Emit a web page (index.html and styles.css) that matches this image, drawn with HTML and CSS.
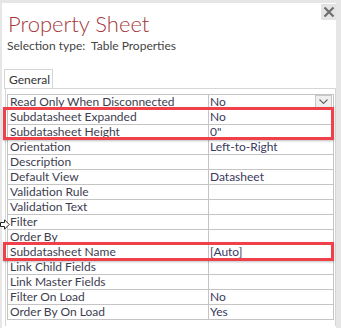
FILE: index.html
```html
<!DOCTYPE html>
<html lang="en">
<head>
  <meta charset="UTF-8" />
  <title>Property Sheet</title>
  <link rel="stylesheet" href="styles.css">
</head>
<body>

<div class="sheet">
  <div class="header">
    <h1>Property Sheet</h1>
    <button class="close" title="Close">
      <svg width="12" height="12" viewBox="0 0 12 12">
        <path d="M1.5 1.5 L10.5 10.5 M10.5 1.5 L1.5 10.5" stroke="#6e6e6e" stroke-width="2.2"/>
      </svg>
    </button>
  </div>
  <div class="selection">Selection type:&nbsp; Table Properties</div>

  <div class="tabs">
    <div class="tab">General</div>
  </div>

  <div class="panel">
    <div class="grid">
      <div class="cell">Read Only When Disconnected</div>
      <div class="cell value">No
        <span class="drop">
          <svg width="9" height="6" viewBox="0 0 9 6"><path d="M0.5 0.5 L4.5 4.5 L8.5 0.5" fill="none" stroke="#666" stroke-width="1.1"/></svg>
        </span>
      </div>
      <div class="cell">Subdatasheet Expanded</div>
      <div class="cell value">No</div>
      <div class="cell">Subdatasheet Height</div>
      <div class="cell value">0"</div>
      <div class="cell">Orientation</div>
      <div class="cell value">Left-to-Right</div>
      <div class="cell">Description</div>
      <div class="cell value"></div>
      <div class="cell">Default View</div>
      <div class="cell value">Datasheet</div>
      <div class="cell">Validation Rule</div>
      <div class="cell value"></div>
      <div class="cell">Validation Text</div>
      <div class="cell value"></div>
      <div class="cell">Filter</div>
      <div class="cell value"></div>
      <div class="cell">Order By</div>
      <div class="cell value"></div>
      <div class="cell">Subdatasheet Name</div>
      <div class="cell value">[Auto]</div>
      <div class="cell">Link Child Fields</div>
      <div class="cell value"></div>
      <div class="cell">Link Master Fields</div>
      <div class="cell value"></div>
      <div class="cell">Filter On Load</div>
      <div class="cell value">No</div>
      <div class="cell">Order By On Load</div>
      <div class="cell value">Yes</div>
    </div>

    <!-- highlight boxes drawn over the grid -->
    <div class="mark mark-1"></div>
    <div class="mark mark-2"></div>
  </div>

  <svg class="pointer" width="10" height="11" viewBox="0 0 10 11">
    <path d="M0.5 3.5 H4.5 V0.8 L9.2 5.5 L4.5 10.2 V7.5 H0.5 Z" fill="#fff" stroke="#222" stroke-width="1"/>
  </svg>
</div>

</body>
</html>
```

FILE: styles.css
```css
body {
  margin: 0;
  background-color: #e6e6e6;
  font-family: 'Lato', 'Open Sans', sans-serif;
  color: #3d3d4f;
}

.sheet {
  position: relative;
  margin: 3px 0 0 2px;
  width: 334px;
  height: 325px;
  background-color: #ffffff;
}

.header {
  display: flex;
  justify-content: space-between;
  align-items: flex-start;
}

.header h1 {
  margin: 8px 0 0 6px;
  font-size: 22px;
  font-weight: 300;
  line-height: 26px;
  color: #a4373a;
}

.close {
  width: 15px;
  height: 16px;
  margin: 1px 0 0 0;
  padding: 0;
  border: none;
  background-color: #e3e3e3;
  display: flex;
  align-items: center;
  justify-content: center;
}

.selection {
  margin: 1px 0 0 5px;
  font-size: 12px;
  line-height: 16px;
  color: #444444;
}

.tabs {
  display: flex;
  margin: 14px 0 0 2px;
}

.tab {
  padding: 0 0 0 4px;
  width: 43px;
  height: 19px;
  border: 1px solid #d6d6d6;
  border-bottom: none;
  font-size: 12px;
  line-height: 19px;
  color: #333333;
  position: relative;
  top: 1px;
  background-color: #ffffff;
}

.panel {
  position: relative;
  margin-left: 3px;
  padding: 5px 1px 0 1px;
  border: 1px solid #d6d6d6;
  border-bottom: none;
  height: 232px;
}

.grid {
  display: grid;
  grid-template-columns: 201px 125px;
  border-top: 1px solid #c4c4c4;
  border-left: 1px solid #c4c4c4;
}

.cell {
  display: flex;
  align-items: center;
  height: 14px;
  padding-left: 2px;
  border-right: 1px solid #c4c4c4;
  border-bottom: 1px solid #c4c4c4;
  font-size: 12px;
  line-height: 14px;
  white-space: nowrap;
  overflow: hidden;
}

.value {
  padding-left: 1px;
  color: #3a3a60;
}

.drop {
  margin-left: auto;
  margin-right: 1px;
  width: 15px;
  height: 12px;
  border: 1px solid #c8c8c8;
  background-color: #efefef;
  display: flex;
  align-items: center;
  justify-content: center;
}

.mark {
  position: absolute;
  left: -3px;
  width: 325px;
  border: 3px solid #f0414a;
  box-shadow: 0 1px 2px rgba(0, 0, 0, 0.25);
}

.mark-1 {
  top: 18px;
  height: 27px;
}

.mark-2 {
  top: 153px;
  height: 13px;
}

.pointer {
  position: absolute;
  left: -2px;
  top: 216px;
}
```
